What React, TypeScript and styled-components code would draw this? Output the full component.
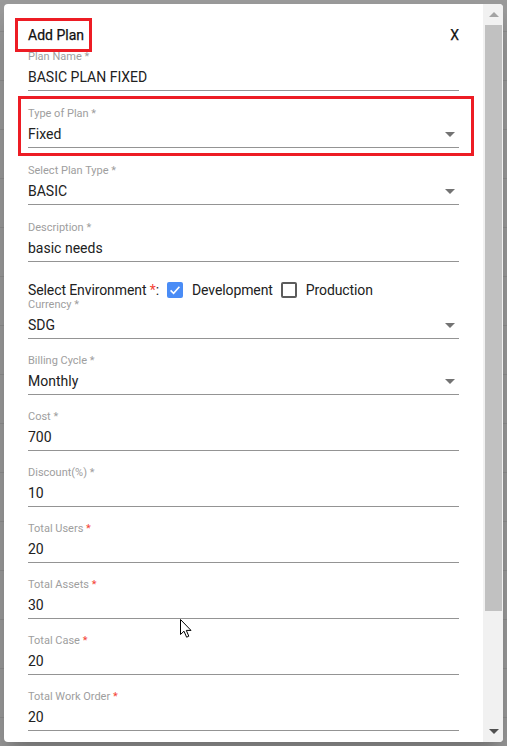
import React from 'react'
import styled, { createGlobalStyle, css } from 'styled-components'

type FieldType = {
  label: string
  value: string
  select?: boolean
  redStar?: boolean
  marked?: boolean
  top?: number
}

const topFields: FieldType[] = [
  { label: 'Plan Name', value: 'BASIC PLAN FIXED', top: -2 },
  { label: 'Type of Plan', value: 'Fixed', select: true, marked: true },
  { label: 'Select Plan Type', value: 'BASIC', select: true },
  { label: 'Description', value: 'basic needs' },
]

const bottomFields: FieldType[] = [
  { label: 'Currency', value: 'SDG', select: true, top: 0 },
  { label: 'Billing Cycle', value: 'Monthly', select: true },
  { label: 'Cost', value: '700' },
  { label: 'Discount(%)', value: '10' },
  { label: 'Total Users', value: '20', redStar: true },
  { label: 'Total Assets', value: '30', redStar: true },
  { label: 'Total Case', value: '20', redStar: true },
  { label: 'Total Work Order', value: '20', redStar: true },
]

const ArrowDown = ({ color = '#737373' }: { color?: string }) => (
  <svg width="10" height="5" viewBox="0 0 10 5">
    <polygon points="0,0 10,0 5,5" fill={color} />
  </svg>
)

const ArrowUp = ({ color }: { color: string }) => (
  <svg width="10" height="5" viewBox="0 0 10 5">
    <polygon points="0,5 10,5 5,0" fill={color} />
  </svg>
)

const FormField: React.FC<{ field: FieldType; gap: number }> = ({ field, gap }) => (
  <Field $top={field.top ?? gap} $marked={field.marked}>
    <Label>
      {field.label} <Star $red={field.redStar}>*</Star>
    </Label>
    <Control>
      <span>{field.value}</span>
      {field.select && <ArrowDown />}
    </Control>
  </Field>
)

export default function App() {
  return (
    <>
      <GlobalStyle />
      <Backdrop>
        <Dialog>
          <Content>
            <Header>
              <Title>Add Plan</Title>
              <Close>X</Close>
            </Header>
            {topFields.map((f) => (
              <FormField key={f.label} field={f} gap={16} />
            ))}
            <EnvRow>
              <span>
                Select Environment <Star $red>*</Star>:
              </span>
              <CheckBox $checked>
                <svg width="16" height="16" viewBox="0 0 16 16">
                  <polyline points="3.6,8.4 6.6,11.3 12.4,4.8" fill="none" stroke="#fff" strokeWidth="1.6" />
                </svg>
              </CheckBox>
              <CheckText>Development</CheckText>
              <CheckBox />
              <CheckText>Production</CheckText>
            </EnvRow>
            {bottomFields.map((f) => (
              <FormField key={f.label} field={f} gap={15} />
            ))}
          </Content>
          <Scrollbar>
            <ScrollButton>
              <ArrowUp color="#a3a3a3" />
            </ScrollButton>
            <Thumb />
            <ScrollButton $end>
              <ArrowDown color="#505050" />
            </ScrollButton>
          </Scrollbar>
        </Dialog>
        <Cursor width="13" height="20" viewBox="0 0 13 20">
          <path
            d="M0.5 0.5 L0.5 15.5 L4 12.2 L6.6 18.2 L8.8 17.2 L6.3 11.4 L11 11.4 Z"
            fill="#fff"
            stroke="#000"
            strokeWidth="1"
            strokeLinejoin="round"
          />
        </Cursor>
      </Backdrop>
    </>
  )
}

const GlobalStyle = createGlobalStyle`
  html, body {
    margin: 0;
  }
  body {
    font-family: Roboto, 'Liberation Sans', Arial, sans-serif;
    background-color: #9b9b9b;
    background-image: repeating-linear-gradient(to bottom, transparent 0 48px, #8f8f8f 48px 49px);
    background-position: 0 -17px;
  }
`

const Backdrop = styled.div`
  position: relative;
  height: 746px;
  padding: 4px;
  box-sizing: border-box;
`

const Dialog = styled.div`
  display: flex;
  height: 738px;
  background: #fff;
  border-radius: 4px;
  overflow: hidden;
  box-shadow: 0 11px 15px -7px rgba(0, 0, 0, 0.2), 0 24px 38px 3px rgba(0, 0, 0, 0.14);
`

const Content = styled.div`
  flex: 1;
  min-width: 0;
  padding: 14px 24px 0;
  overflow: hidden;
`

const Header = styled.div`
  display: flex;
  align-items: center;
  justify-content: space-between;
  color: #111;
  font-size: 14px;
`

const Title = styled.h2`
  margin: 0 0 0 -13px;
  padding: 0 5px 0 10px;
  border: 3px solid #ed1c24;
  font-size: 14px;
  font-weight: 400;
  line-height: 28px;
  -webkit-text-stroke: 0.25px #111;
`

const Close = styled.span`
  line-height: 28px;
  -webkit-text-stroke: 0.25px #111;
`

const Field = styled.div<{ $top: number; $marked?: boolean }>`
  position: relative;
  margin-top: ${(p) => p.$top}px;

  ${(p) =>
    p.$marked &&
    css`
      &::before {
        content: '';
        position: absolute;
        top: -11px;
        bottom: -8px;
        left: -10px;
        right: -15px;
        border: 3px solid #ed1c24;
        pointer-events: none;
      }
    `}
`

const Label = styled.div`
  height: 14px;
  font-size: 11px;
  line-height: 14px;
  color: #9e9e9e;
`

const Star = styled.span<{ $red?: boolean }>`
  color: ${(p) => (p.$red ? '#f44336' : 'inherit')};
`

const Control = styled.div`
  display: flex;
  align-items: center;
  justify-content: space-between;
  height: 26px;
  padding-right: 4px;
  border-bottom: 1px solid #949494;
  font-size: 14px;
  color: #212121;

  & > svg {
    margin-top: 1px;
  }
`

const EnvRow = styled.div`
  display: flex;
  align-items: center;
  height: 16px;
  margin-top: 20px;
  font-size: 14px;
  letter-spacing: -0.1px;
  color: #212121;
`

const CheckBox = styled.span<{ $checked?: boolean }>`
  display: inline-flex;
  width: 16px;
  height: 16px;
  margin-left: 8px;
  box-sizing: border-box;
  border-radius: 2px;
  ${(p) =>
    p.$checked
      ? css`
          background: #4a8cf6;
        `
      : css`
          border: 2px solid #5c5c5c;
        `}
`

const CheckText = styled.span`
  margin-left: 9px;
`

const Scrollbar = styled.div`
  display: flex;
  flex-direction: column;
  width: 20px;
  background: #f1f1f1;
`

const ScrollButton = styled.div<{ $end?: boolean }>`
  display: flex;
  align-items: center;
  justify-content: center;
  height: 21px;
  padding-left: 1px;
  margin-top: ${(p) => (p.$end ? 'auto' : '0')};
`

const Thumb = styled.div`
  height: 586px;
  margin: 0 1px 0 2px;
  background: #c1c1c1;
`

const Cursor = styled.svg`
  position: absolute;
  left: 180px;
  top: 619px;
`
